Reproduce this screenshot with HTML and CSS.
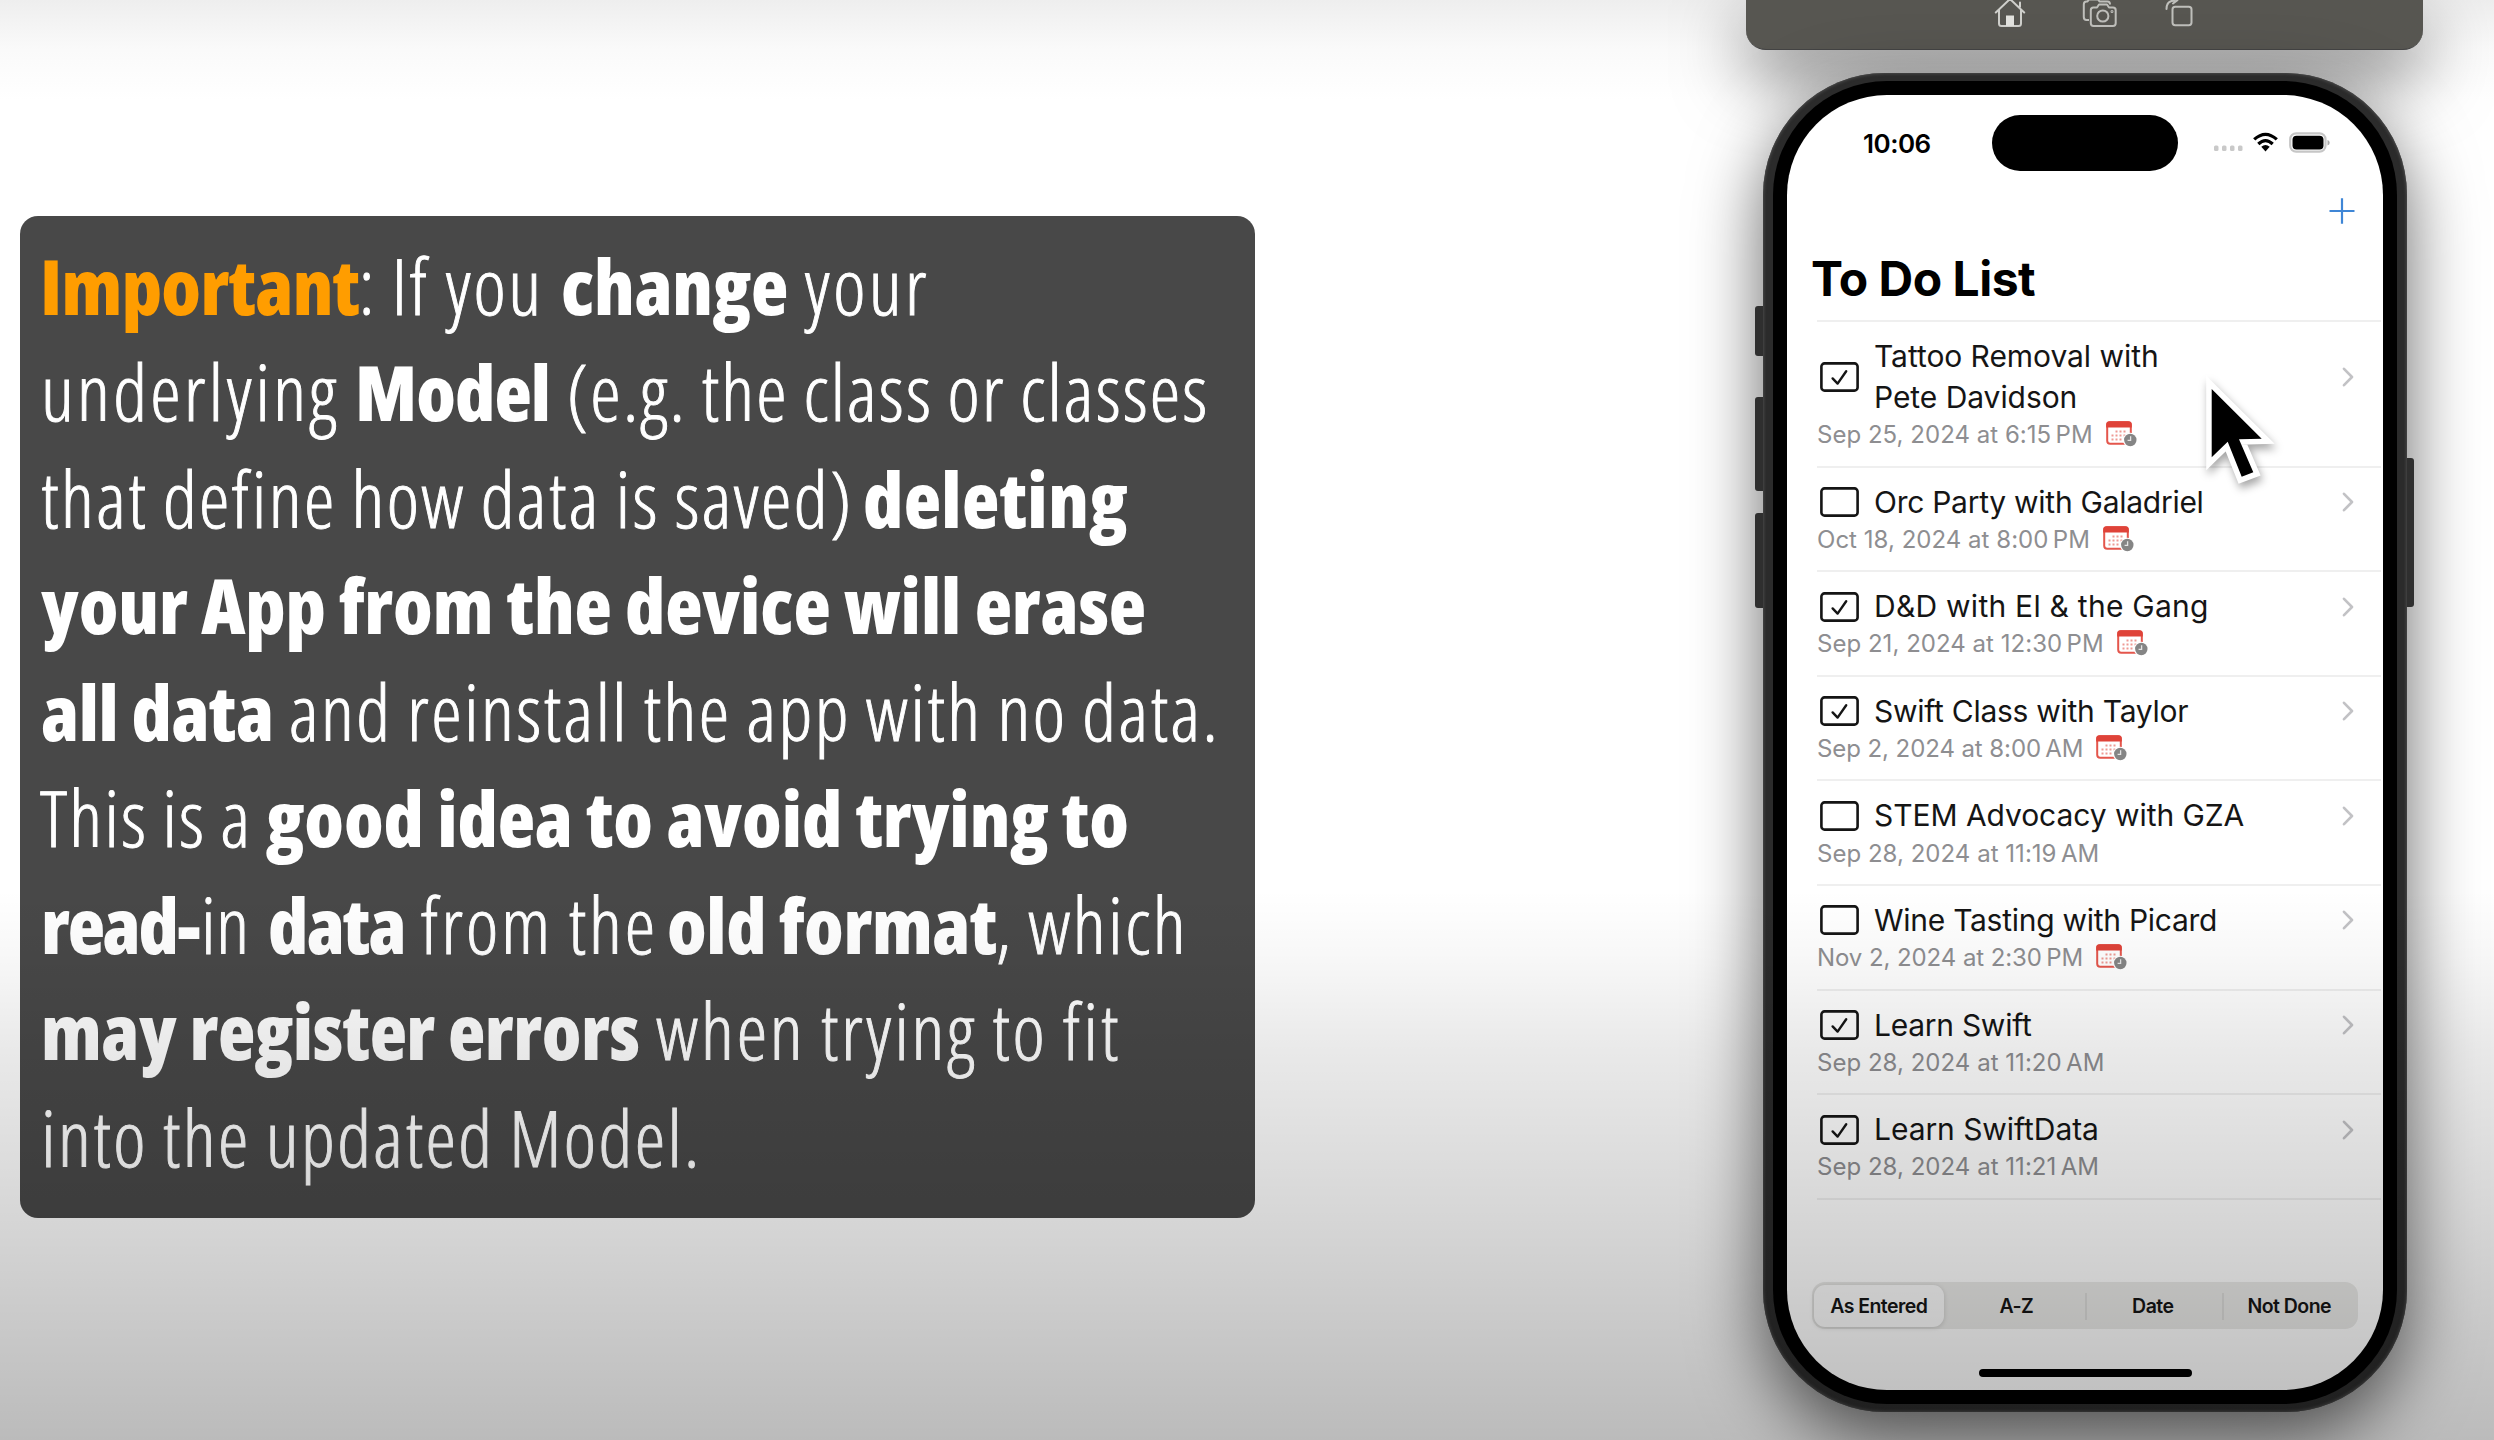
FILE: index.html
```html
<!DOCTYPE html>
<html lang="en">
<head>
<meta charset="utf-8">
<title>To Do List</title>
<link rel="stylesheet" href="styles.css">
</head>
<body>
<svg class="defs" aria-hidden="true">
  <symbol id="box" viewBox="0 0 39 30"><rect x="1.4" y="1.4" width="36.2" height="27.2" rx="3.2" fill="none" stroke="currentColor" stroke-width="2.6"/></symbol>
  <symbol id="checked" viewBox="0 0 39 30"><rect x="1.4" y="1.4" width="36.2" height="27.2" rx="3.2" fill="none" stroke="currentColor" stroke-width="2.6"/><path d="M12.6 16.4 17.6 21.6 26.2 9.2" fill="none" stroke="currentColor" stroke-width="2.4" stroke-linecap="round" stroke-linejoin="round"/></symbol>
  <symbol id="chevron" viewBox="0 0 12 20"><path d="M2 1.8 10 10 2 18.200" fill="none" stroke="currentColor" stroke-width="2.6" stroke-linecap="round" stroke-linejoin="round"/></symbol>
  <symbol id="calendar" viewBox="0 0 32 27">
    <rect x="1.2" y="1.2" width="23.600" height="21.600" rx="3" fill="#fff" stroke="#e4564c" stroke-width="2"/>
    <path d="M.2 6.500V3.500A3.300 3.300 0 0 1 3.500.2h19A3.300 3.300 0 0 1 25.800 3.500v3z" fill="#df4339"/>
    <path d="M9.500 10.500h12M5.500 14.500h16M5.500 18.500h12" stroke="#ee9a94" stroke-width="2" stroke-dasharray="2 2"/>
    <circle cx="24.300" cy="19" r="7.300" fill="#fff"/>
    <circle cx="24.300" cy="19" r="6.200" fill="#858585"/>
    <path d="M24.600 15.200V19.400H21.600" fill="none" stroke="#e4e4e4" stroke-width="1.300"/>
  </symbol>
</svg>

<main class="note">
  <p class="line l1"><b class="hot">Important</b><span>: If you </span><b>change </b><span>your</span></p>
  <p class="line l2"><span>underlying </span><b>Model </b><span>(e.g. the class or classes</span></p>
  <p class="line l3"><span>that define how data is saved) </span><b>deleting</b></p>
  <p class="line l4"><b>your App from the device will erase</b></p>
  <p class="line l5"><b>all data </b><span>and reinstall the app with no data.</span></p>
  <p class="line l6"><span>This is a </span><b>good idea to avoid trying to</b></p>
  <p class="line l7"><b>read-</b><span>in </span><b>data </b><span>from the </span><b>old format</b><span>, which</span></p>
  <p class="line l8"><b>may register errors </b><span>when trying to fit</span></p>
  <p class="line l9"><span>into the updated Model.</span></p>
</main>

<aside class="simulator">
  <div class="toolbar">
    <svg width="32" height="28" viewBox="0 0 32 28" fill="none" stroke="#cfcfcb" stroke-width="2" stroke-linejoin="round" stroke-linecap="round"><path d="M1.800 12.500 16-1 30.200 12.500M5 10v13.500q0 2.500 2.500 2.500h17q2.500 0 2.500-2.500V10M26 7V2.500"/><path d="M12 15.500h8V26h-8z" fill="#e2e2de" stroke="none"/></svg>
    <svg class="camera" width="36" height="28" viewBox="0 0 36 28" fill="none" stroke="#bfbfbb" stroke-width="2" stroke-linejoin="round"><path d="M7 20H4.500Q1.800 20 1.800 17V4.500Q1.800 1.500 4.500 1.500h1L7-.5h9l1.500 2h8Q28 1.500 28 4.500"/><path d="M11.500 7.500H15L17 4.500h8l2 3h4q2.700 0 2.700 2.700v13q0 2.700-2.700 2.700H11.500q-2.700 0-2.700-2.700v-13q0-2.700 2.700-2.700z"/><circle cx="20.800" cy="16" r="5.600"/><circle cx="30" cy="11.500" r=".5"/></svg>
    <svg class="rotate" width="28" height="28" viewBox="0 0 28 28" fill="none" stroke="#bfbfbb" stroke-width="2"><rect x="7.500" y="6.800" width="19" height="18.400" rx="2.700"/><path d="M1.500 9Q1.500 1 9 .5M8-2.500 12 .5 8 3.500" stroke-linecap="round"/></svg>
  </div>

  <div class="phone">
    <i class="key k1"></i><i class="key k2"></i><i class="key k3"></i><i class="key k4"></i>
    <div class="bezel">
      <div class="screen">
        <header class="status">
          <span class="time">10:06</span>
          <span class="island"></span>
          <svg width="118" height="24" viewBox="0 0 118 24">
            <g fill="#c9c9c9"><rect x="0" y="14.500" width="4.500" height="5.500" rx="1.500"/><rect x="8" y="14.500" width="4.500" height="5.500" rx="1.500"/><rect x="16" y="14.500" width="4.500" height="5.500" rx="1.500"/><rect x="24" y="14.500" width="4.500" height="5.500" rx="1.500"/></g>
            <g fill="none" stroke="#000" stroke-width="3.200"><path d="M40.200 8.400Q51.500-1.800 62.800 8.400"/><path d="M44.300 13Q51.500 6.200 58.700 13"/></g>
            <path d="M47.300 15.800Q51.500 12.200 55.700 15.800L51.500 20.400z"/>
            <rect x="76.200" y="2.300" width="35.300" height="18.400" rx="6" fill="#fff" stroke="#c6c6c6" stroke-width="2.200"/>
            <rect x="78.500" y="4.700" width="31" height="13.800" rx="4"/>
            <path d="M113.500 9q2.200.6 2.200 2.700t-2.200 2.700z" fill="#aaa"/>
          </svg>
        </header>
        <div class="nav"><svg width="28" height="28" viewBox="0 0 28 28"><path d="M14 1.200v25.600M1.500 14h25" stroke="#3f86d6" stroke-width="2.200" fill="none"/></svg></div>
        <h1>To Do List</h1>
        <ul class="list">
          <li><div class="task"><svg class="check"><use href="#checked"/></svg><span class="n1">Tattoo Removal with<br>Pete Davidson</span><svg class="chev"><use href="#chevron"/></svg></div><div class="due"><span>Sep 25, 2024 at 6:15&#8201;PM</span><svg><use href="#calendar"/></svg></div></li>
          <li><div class="task"><svg class="check"><use href="#box"/></svg><span class="n2">Orc Party with Galadriel</span><svg class="chev"><use href="#chevron"/></svg></div><div class="due"><span>Oct 18, 2024 at 8:00&#8201;PM</span><svg><use href="#calendar"/></svg></div></li>
          <li><div class="task"><svg class="check"><use href="#checked"/></svg><span class="n3">D&amp;D with El &amp; the Gang</span><svg class="chev"><use href="#chevron"/></svg></div><div class="due"><span>Sep 21, 2024 at 12:30&#8201;PM</span><svg><use href="#calendar"/></svg></div></li>
          <li><div class="task"><svg class="check"><use href="#checked"/></svg><span class="n2">Swift Class with Taylor</span><svg class="chev"><use href="#chevron"/></svg></div><div class="due tight"><span>Sep 2, 2024 at 8:00&#8201;AM</span><svg><use href="#calendar"/></svg></div></li>
          <li><div class="task"><svg class="check"><use href="#box"/></svg><span class="n1">STEM Advocacy with GZA</span><svg class="chev"><use href="#chevron"/></svg></div><div class="due"><span>Sep 28, 2024 at 11:19&#8201;AM</span></div></li>
          <li><div class="task"><svg class="check"><use href="#box"/></svg><span class="n2">Wine Tasting with Picard</span><svg class="chev"><use href="#chevron"/></svg></div><div class="due tight"><span>Nov 2, 2024 at 2:30&#8201;PM</span><svg><use href="#calendar"/></svg></div></li>
          <li><div class="task"><svg class="check"><use href="#checked"/></svg><span class="n2">Learn Swift</span><svg class="chev"><use href="#chevron"/></svg></div><div class="due"><span>Sep 28, 2024 at 11:20&#8201;AM</span></div></li>
          <li><div class="task"><svg class="check"><use href="#checked"/></svg><span class="n1">Learn SwiftData</span><svg class="chev"><use href="#chevron"/></svg></div><div class="due"><span>Sep 28, 2024 at 11:21&#8201;AM</span></div></li>
        </ul>
        <div class="segments">
          <span class="seg on">As Entered</span><span class="seg">A-Z</span><span class="seg split">Date</span><span class="seg split">Not Done</span>
        </div>
        <div class="home"></div>
      </div>
    </div>
  </div>
</aside>

<svg class="cursor" viewBox="0 0 80 120"><path d="M11.700 19V87.300L27.700 71.700 41.700 106.700 53.300 102.300 39 69.300 61.700 68.700z" fill="#fff" stroke="#fff" stroke-width="11" stroke-miterlimit="4"/><path d="M11.700 19V87.300L27.700 71.700 41.700 106.700 53.300 102.300 39 69.300 61.700 68.700z"/></svg>
</body>
</html>
```
FILE: styles.css
```css
* { box-sizing: border-box; margin: 0; padding: 0; }

body {
  position: relative;
  display: flex;
  justify-content: space-between;
  align-items: flex-start;
  width: 2494px;
  height: 1440px;
  overflow: hidden;
  background: linear-gradient(#eee 0, #fafafa 50px, #fff 100px);
  font-family: Inter, sans-serif;
}

/* scrim that darkens the lower part of the frame */
body::after {
  content: "";
  position: absolute;
  inset: 0;
  background: linear-gradient(transparent 890px, rgba(0, 0, 0, .03) 960px, rgba(0, 0, 0, .085) 1050px, rgba(0, 0, 0, .16) 1217px, rgba(0, 0, 0, .265) 1440px);
}

.defs { position: absolute; width: 0; height: 0; }

/* note */
.note {
  width: 1235px;
  height: 1002px;
  margin: 215.500px 0 0 20px;
  padding: 17px 0 0 17px;
  border-radius: 18px;
  background: #484848;
  color: #fff;
  font-family: "Open Sans", sans-serif;
  font-size: 77px;
  font-stretch: 75%;
  font-weight: 300;
  line-height: 106.500px;
}
.line { display: flex; height: 106.500px; white-space: pre; }
.line > * { flex: none; letter-spacing: 2.450px; }
.line span { -webkit-text-stroke: .9px currentColor; word-spacing: -2px; }
.line b { font-weight: 800; letter-spacing: -.1px; }
.l1 { padding-left: 3px; }
.line .hot { color: #ff9d00; letter-spacing: -.650px; width: 319px; }
.l1 > :nth-child(2) { width: 202px; letter-spacing: 2.600px; }
.l1 > :nth-child(3) { width: 243px; letter-spacing: -.260px; }
.l1 > :nth-child(4) { letter-spacing: 3.300px; }
.l2 { padding-left: 4px; }
.l2 > :nth-child(1) { width: 314px; letter-spacing: 3.300px; }
.l2 > :nth-child(2) { width: 212px; letter-spacing: -.900px; }
.l2 > :nth-child(3) { letter-spacing: 2.210px; }
.l3 { padding-left: 4px; }
.l3 > :nth-child(1) { width: 822px; letter-spacing: 2.400px; }
.l3 > :nth-child(2) { letter-spacing: .450px; }
.l4 { padding-left: 4px; }
.l5 { padding-left: 4px; }
.l5 > :nth-child(1) { width: 248px; letter-spacing: -.400px; }
.l6 { padding-left: 3px; }
.l6 > :nth-child(1) { width: 226px; letter-spacing: 2.100px; }
.l7 { padding-left: 4px; }
.l7 > :nth-child(1) { width: 160px; letter-spacing: -2.200px; }
.l7 > :nth-child(2) { width: 67px; letter-spacing: .600px; }
.l7 > :nth-child(3) { width: 153px; letter-spacing: -1.700px; }
.l7 > :nth-child(4) { width: 246px; letter-spacing: 3px; }
.l7 > :nth-child(5) { width: 329px; letter-spacing: -.400px; }
.l8 { padding-left: 4px; }
.l8 > :nth-child(1) { width: 615px; letter-spacing: -.400px; }
.l8 > :nth-child(2) { letter-spacing: 2.850px; }
.l9 { padding-left: 4px; }

/* simulator */
.simulator { width: 677px; margin-right: 71px; }
.toolbar {
  display: flex;
  align-items: flex-start;
  height: 50px;
  padding-left: 248px;
  border-radius: 0 0 20px 20px;
  background: #575651;
  border-bottom: 1px solid #444;
  box-shadow: 0 25px 70px rgba(0, 0, 0, .55);
}
.toolbar svg { overflow: hidden; }
.camera { margin-left: 56px; }
.rotate { margin-left: 47px; }

.phone {
  position: relative;
  width: 644px;
  height: 1339px;
  margin: 23px 0 0 17px;
  padding: 8px 10px;
  border-radius: 122px;
  background: #2b2b2b;
  box-shadow: inset 0 0 3px 1px #4a4a4a, 0 25px 70px rgba(0, 0, 0, .6);
}
.key { position: absolute; width: 8px; background: #2f2f2f; left: -8px; }
.k1 { top: 233px; height: 50px; border-radius: 3px 0 0 3px; }
.k2 { top: 324px; height: 94px; border-radius: 3px 0 0 3px; }
.k3 { top: 440px; height: 95px; border-radius: 3px 0 0 3px; }
.k4 { top: 385px; height: 149px; left: 644px; width: 7px; border-radius: 0 3px 3px 0; }
.bezel { height: 1323px; padding: 14px; border-radius: 114px; background: #000; }
.screen {
  display: flex;
  flex-direction: column;
  height: 1295px;
  border-radius: 100px;
  background: #fff;
  overflow: hidden;
  color: #151515;
}

.status { display: flex; align-items: center; height: 56px; margin-top: 20px; padding-left: 76px; color: #000; }
.time { width: 129px; font-size: 26px; font-weight: 600; letter-spacing: -.500px; }
.island { width: 186px; height: 56px; margin-right: 36px; border-radius: 28px; background: #000; }
.nav { display: flex; justify-content: flex-end; height: 55px; padding: 26px 27px 0 0; }
h1 { margin: 23px 0 11px 24px; font-size: 48px; line-height: 60px; letter-spacing: -.500px; color: #000; }

.list { list-style: none; margin: 0 2px 0 30px; border-bottom: 2px solid #efefef; }
.list li { padding: 14px 0 15.300px; border-top: 2px solid #efefef; }
.task { display: flex; align-items: center; font-size: 30px; line-height: 41px; }
.check { flex: none; width: 39px; height: 30px; margin: 0 15.500px 0 2.500px; }
.chev { width: 12px; height: 20px; margin: 0 27.500px 0 auto; color: #c2c2c5; }
.n1 { letter-spacing: -.060px; }
.n2 { letter-spacing: -.270px; }
.n3 { letter-spacing: .250px; }
.due { display: flex; align-items: center; height: 30px; margin-top: 2.300px; font-size: 24px; line-height: 30px; letter-spacing: .030px; color: #8e8e91; }
.tight { letter-spacing: -.080px; }
.due svg { width: 32px; height: 27px; margin: 0 0 1px 13px; }

.segments {
  display: grid;
  grid-template-columns: repeat(4, 1fr);
  height: 47px;
  margin: auto 25px 40px;
  padding: 2.500px 0;
  border-radius: 13px;
  background: #ebebe9;
}
.seg { text-align: center; font-size: 19.500px; font-weight: 600; line-height: 42px; letter-spacing: -.550px; padding-right: 3px; border-left: 2px solid transparent; }
.on { margin: 0 5px 0 2px; padding: 0; border: 0; border-radius: 11px; background: #fcfcfc; box-shadow: 0 1px 5px rgba(0, 0, 0, .15); }
.split { border-image: linear-gradient(transparent 20%, #dcdcda 20% 82%, transparent 82%) 1; }
.home { flex: none; width: 213px; height: 8px; margin: 0 auto 13px; border-radius: 4px; background: #000; }

.cursor { position: absolute; left: 2200px; top: 370px; width: 80px; height: 120px; overflow: visible; filter: drop-shadow(2px 5px 4px rgba(0, 0, 0, .35)); }
```
